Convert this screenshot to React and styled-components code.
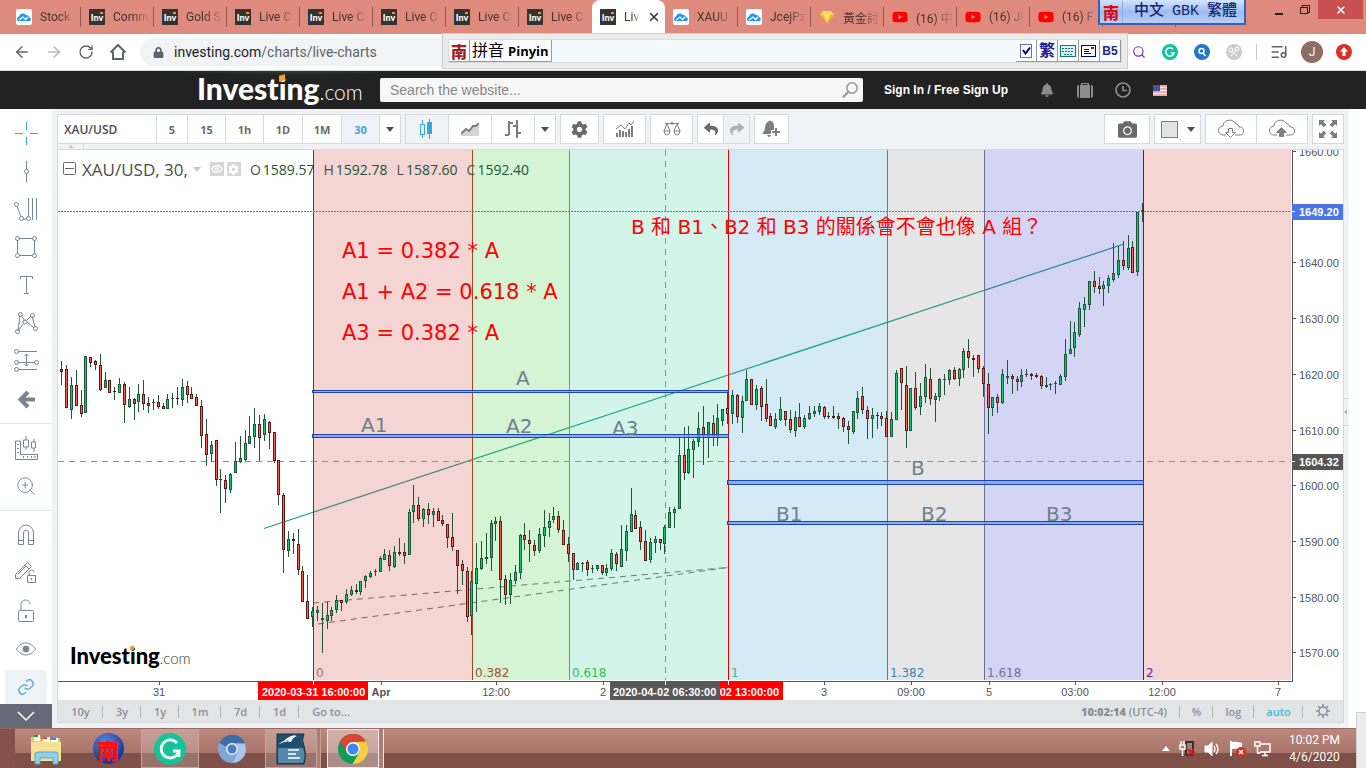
import styled, { createGlobalStyle } from "styled-components";
import { ArrowLeft, ArrowRight, RotateCw, X, Search, Eye, ZoomIn, ListMusic } from "lucide-react";
import { FaYoutube, FaCog, FaBell, FaCamera, FaReply, FaShare, FaLock } from "react-icons/fa";

const tabs = [
    { icon: "cloud", title: "Stock" },
    { icon: "inv", title: "Comm" },
    { icon: "inv", title: "Gold S" },
    { icon: "inv", title: "Live C" },
    { icon: "inv", title: "Live C" },
    { icon: "inv", title: "Live C" },
    { icon: "inv", title: "Live C" },
    { icon: "inv", title: "Live C" },
    { icon: "inv", title: "Liv", active: true },
    { icon: "cloud", title: "XAUU" },
    { icon: "cloud", title: "JcejPz" },
    { icon: "gem", title: "黃金討" },
    { icon: "yt", title: "(16) 中" },
    { icon: "yt", title: "(16) Ji" },
    { icon: "yt", title: "(16) F" },
];

// high, body top, body bottom, low, up (1) / down (0)
const candles = [
    [361,369,372,385,0],[365,369,408,408,0],[377,385,410,419,1],[370,385,406,406,0],[390,405,414,417,0],
    [356,356,413,413,1],[357,357,363,367,0],[360,361,365,370,0],[354,365,390,391,0],[372,380,388,388,1],
    [380,380,393,393,0],[387,391,392,400,0],[378,384,393,393,1],[382,384,405,423,0],[387,399,407,408,1],
    [398,399,404,420,0],[384,394,402,412,1],[380,394,404,410,0],[397,403,406,413,0],[399,402,403,410,1],
    [395,402,407,409,0],[403,406,409,409,0],[394,399,409,409,1],[393,398,399,408,1],[387,398,399,405,0],
    [379,387,400,406,1],[381,386,395,403,0],[387,394,399,399,0],[394,397,406,406,0],[400,406,436,448,0],
    [419,434,455,466,0],[441,445,454,462,1],[440,440,480,486,0],[469,479,480,513,0],[475,480,489,503,0],
    [473,474,490,493,1],[442,461,473,473,1],[436,458,462,463,1],[430,443,460,461,1],[416,436,444,444,1],
    [408,424,437,448,1],[415,424,438,461,0],[414,419,435,441,1],[421,422,433,449,0],[432,432,461,463,0],
    [460,460,495,505,0],[493,495,550,573,0],[531,539,551,557,1],[533,539,541,554,0],[529,544,570,575,0],
    [566,571,602,602,0],[575,601,619,619,0],[607,611,617,627,1],[606,610,613,621,1],[603,618,620,653,1],
    [602,615,621,629,1],[607,610,616,621,1],[595,600,610,613,1],[600,600,603,611,0],[589,594,602,604,1],
    [586,590,595,596,1],[584,590,592,594,0],[581,581,592,595,1],[575,576,581,588,1],[571,573,577,578,1],
    [569,571,572,576,1],[556,558,572,572,1],[549,554,560,560,1],[550,555,566,571,0],[546,552,567,568,1],
    [538,552,554,556,0],[543,552,556,564,0],[509,512,555,555,1],[485,505,512,523,1],[497,505,519,521,0],
    [508,509,519,527,1],[503,509,515,524,0],[508,511,515,527,1],[508,511,521,521,0],[515,520,524,526,0],
    [524,524,538,548,0],[513,537,547,551,0],[550,550,566,594,0],[560,564,571,585,0],[567,571,617,622,0],
    [571,581,616,635,1],[543,568,584,612,1],[541,558,569,570,1],[533,557,559,564,1],[520,523,558,571,1],
    [517,521,524,541,1],[516,521,580,603,0],[575,579,595,605,0],[573,580,595,604,1],[565,572,581,584,1],
    [534,535,573,579,1],[523,535,540,550,0],[530,540,544,562,0],[540,545,551,556,0],[528,534,551,553,1],
    [510,527,536,547,1],[513,521,528,537,1],[507,516,520,523,1],[511,516,530,533,0],[520,530,545,545,0],
    [537,544,554,562,0],[553,553,570,580,0],[562,563,570,570,1],[562,563,564,572,1],[560,562,570,576,0],
    [565,568,569,573,1],[565,565,569,571,1],[565,565,573,575,0],[564,568,573,576,1],[549,553,569,571,1],
    [552,554,564,571,0],[525,549,567,567,1],[525,531,551,561,1],[488,514,532,532,1],[510,515,529,529,0],
    [521,527,542,550,0],[530,541,561,561,0],[538,542,560,563,1],[536,539,543,553,1],[539,539,543,550,0],
    [525,527,544,554,1],[507,512,528,528,1],[507,509,513,528,1],[437,455,509,509,1],[427,455,473,480,0],
    [426,449,473,474,1],[439,441,450,478,1],[412,428,442,447,1],[406,427,436,465,0],[422,422,437,458,1],
    [415,423,436,446,0],[404,418,437,446,1],[409,409,421,426,1],[390,408,414,424,0],[390,395,414,424,1],
    [394,395,417,423,0],[396,401,418,433,1],[370,379,401,401,1],[379,379,405,405,0],[385,389,405,410,1],
    [386,388,407,421,0],[379,404,419,422,0],[413,416,426,426,0],[413,419,427,429,1],[397,409,420,421,1],
    [411,411,420,426,0],[410,419,430,433,0],[411,417,431,437,1],[403,417,427,427,0],[415,418,427,429,1],
    [406,413,419,420,1],[406,411,414,417,1],[403,406,412,415,1],[406,407,417,419,0],[412,416,417,419,0],
    [406,416,418,419,0],[413,416,419,429,0],[417,418,427,432,0],[421,426,430,444,0],[411,411,432,434,1],
    [391,398,413,419,1],[387,396,410,414,0],[406,410,419,439,0],[408,415,419,438,1],[412,415,416,429,0],
    [412,416,419,426,0],[411,418,437,437,0],[412,419,437,437,1],[370,373,420,420,1],[368,368,383,410,0],
    [366,385,431,448,0],[388,388,431,431,1],[372,388,408,410,0],[383,396,407,415,1],[364,377,397,403,1],
    [368,379,399,405,0],[393,396,400,422,1],[378,379,397,401,1],[374,379,380,395,1],[369,370,380,385,1],
    [367,370,379,380,0],[368,369,379,386,1],[348,351,370,378,1],[339,351,358,368,0],[355,358,360,377,0],
    [355,355,369,373,0],[366,368,384,397,0],[373,384,408,434,0],[397,397,408,416,1],[394,397,403,413,0],
    [369,374,403,404,1],[360,376,378,384,1],[374,376,379,394,0],[376,379,382,391,0],[369,375,382,387,1],
    [369,374,375,377,0],[373,374,376,380,0],[373,375,377,378,0],[375,376,386,389,0],[377,385,387,388,1],
    [383,384,385,390,1],[381,383,384,394,1],[374,376,385,385,1],[339,354,377,381,1],[321,349,354,354,1],
    [322,332,348,357,1],[302,308,335,337,1],[297,304,310,327,1],[281,281,305,310,1],[271,281,287,293,0],
    [277,286,289,294,0],[281,285,289,306,1],[275,278,286,293,1],[243,273,280,282,1],[246,260,275,278,1],
    [241,260,266,270,0],[235,248,268,270,1],[241,247,273,273,0],[212,212,272,276,1],[203,210,211,222,0],
];

const candleX = (i) => 61 + Math.floor(i * 4.825 + 0.72);

const zones = [
    { x: 313, end: 472, fill: "#c82d23", line: "#e80000", label: "0", color: "#957872" },
    { x: 472, end: 569, fill: "#28c823", line: "#a4481f", label: "0.382", color: "#a9502f" },
    { x: 569, end: 728, fill: "#23cd91", line: "#33bb55", label: "0.618", color: "#2fc04c" },
    { x: 728, end: 887, fill: "#2896cd", line: "#f00000", label: "1", color: "#34b79e" },
    { x: 887, end: 984, fill: "#828282", line: "#4688ac", label: "1.382", color: "#3c86b4" },
    { x: 984, end: 1143, fill: "#2828c8", line: "#6c6c98", label: "1.618", color: "#73739b" },
    { x: 1143, end: 1291, fill: "#c82d23", line: "#41209c", label: "2", color: "#5230b0" },
];

const spans = [
    [312, 728, 390, 3],
    [312, 728, 434, 4],
    [727, 1143, 480, 5],
    [727, 1143, 521, 4],
];

const notes = [
    [516, 385, "A"], [361, 432, "A1"], [506, 433, "A2"], [612, 435, "A3"],
    [911, 475, "B"], [776, 521, "B1"], [921, 521, "B2"], [1046, 521, "B3"],
];

const formulas = [[342, 258, "A1 = 0.382 * A"], [342, 299, "A1 + A2 = 0.618 * A"], [342, 340, "A3 = 0.382 * A"]];

const prices = [[151, "1660.00"], [262, "1640.00"], [318, "1630.00"], [374, "1620.00"], [430, "1610.00"], [485, "1600.00"], [541, "1590.00"], [597, "1580.00"], [652, "1570.00"]];

const times = [[159, "31"], [381, "Apr"], [496, "12:00"], [603, "2"], [824, "3"], [911, "09:00"], [989, "5"], [1075, "03:00"], [1162, "12:00"], [1278, "7"]];

const ranges = [["10y", 45], ["3y", 38], ["1y", 38], ["1m", 42], ["7d", 39], ["1d", 39]];

const intervals = [["5", 31], ["15", 38], ["1h", 38], ["1D", 39], ["1M", 39], ["30", 38]];

const TabIcon = ({ type }) => {
    if (type === "inv") return <InvIcon>Inv</InvIcon>;
    if (type === "yt") return <FaYoutube size={16} color="#ff0000" />;
    if (type === "gem")
        return (
            <svg width="16" height="16" viewBox="0 0 16 16">
                <path d="M4 2h8l3 4-7 8-7-8z" fill="#f9b61c" />
                <path d="M4 2h8l3 4H1z" fill="#ffd85a" />
                <path d="M5 6h6l-3 8z" fill="#ffe27a" />
            </svg>
        );
    return (
        <svg width="16" height="16" viewBox="0 0 16 16">
            <rect width="16" height="16" rx="2" fill="#fff" />
            <path d="M2 12a2.500 2.500 0 0 1 1-4.500 4 4 0 0 1 7-1.500 3 3 0 0 1 3 2 2.300 2.300 0 0 1 1 4z" fill="#2196f3" />
            <path d="M3 11l4-3 2.500 2.500L12 8" stroke="#fff" strokeWidth="1.300" fill="none" />
        </svg>
    );
};

const Stroke = ({ children, size = 26, color = "#758696" }) => (
    <svg width={size} height={size} viewBox="0 0 26 26" fill="none" stroke={color} strokeWidth="1">
        {children}
    </svg>
);

const tools = [
    ["Crosshair", <Stroke color="#37a6dc"><path d="M2 13.500h8M17 13.500h8M13.500 2v8M13.500 17v8" /></Stroke>],
    ["Vertical line", <Stroke><path d="M13.500 3v8M13.500 16v8" /><circle cx="13.500" cy="13.500" r="2" /></Stroke>],
    ["Pitchfork", <Stroke><path d="M4 10l4 11M10 23h4M15.500 2v19M19.500 2v22M23.500 2v22" /><circle cx="3.500" cy="8.500" r="2" /><circle cx="8.500" cy="22.500" r="2" /><circle cx="15.500" cy="22.500" r="2" /></Stroke>],
    ["Rectangle", <Stroke><path d="M6 4.500h13M6 21.500h13M4.500 6v13M21.500 6v13" /><circle cx="4.500" cy="4.500" r="2" /><circle cx="21.500" cy="4.500" r="2" /><circle cx="4.500" cy="21.500" r="2" /><circle cx="21.500" cy="21.500" r="2" /></Stroke>],
    ["Text", <Stroke><path d="M7.500 7v-2.500h12v2.500M13.500 4.500v17M11 21.500h5" /></Stroke>],
    ["Pattern", <Stroke><path d="M5 21L7 6M8 5l4 6M14 10l4-4M19 6l3 11M21 18l-7-6M11 13l-6 8" /><circle cx="7.500" cy="4.500" r="2" /><circle cx="19.500" cy="5.500" r="2" /><circle cx="12" cy="12" r="2" /><circle cx="4.500" cy="21.500" r="2" /><circle cx="22.500" cy="18.500" r="2" /></Stroke>],
    ["Forecast", <Stroke><path d="M6 3.500h18M6 14.500h16M6 21.500h18M13.500 6v12M11.500 8l2-2 2 2M11.500 16l2 2 2-2" /><circle cx="3.500" cy="3.500" r="2" /><circle cx="3.500" cy="14.500" r="2" /><circle cx="23.500" cy="14.500" r="2" /><circle cx="3.500" cy="21.500" r="2" /></Stroke>],
    ["Back", <Stroke><path d="M8 13.500h14M15 6l-7.500 7.500L15 21" strokeWidth="4" /></Stroke>],
];

const measureTools = [
    ["Measure", <Stroke><path d="M2.500 6v18.500h22v-5H7.500V6zM4 9.500h2M4 13.500h2M4 17.500h2M10.500 21v2M14.500 21v2M18.500 21v2M22 21v2M13 1v4M13 12v3M10.500 5h5v7h-5zM21 4v3M21 13v4M18.500 7h4v6h-4z" /></Stroke>],
    ["Zoom in", <ZoomIn size={22} strokeWidth={1} />],
];

const lockTools = [
    ["Magnet", <Stroke><path d="M5.500 22.500V11a7.500 8 0 0 1 15 0v11.500h-5V11a2.500 3 0 0 0-5 0v11.500zM5.500 18.500h5M15.500 18.500h5" /></Stroke>],
    ["Stay in drawing mode", <Stroke><path d="M2.500 18.500v-4l12-12 4 4-12 12zM12 5l4 4M5 14l8-8M14.500 15.500h8v7h-8zM16 15v-2a2.500 2.500 0 0 1 5-1M18.500 18v2" /></Stroke>],
    ["Lock", <Stroke><path d="M8 12V7a4.500 4.500 0 0 1 9-1" /><rect x="5.500" y="12.500" width="15" height="11" rx="1" /><path d="M13 17v3" strokeWidth="2" /></Stroke>],
    ["Hide", <Stroke><path d="M3.500 13c5-8 14-8 19 0-5 8-14 8-19 0z" /><circle cx="13" cy="13" r="3" fill="#758696" /></Stroke>],
];

const Caret = ({ color = "#505050" }) => (
    <svg width="8" height="5" viewBox="0 0 8 5"><path d="M0 0h8L4 5z" fill={color} /></svg>
);

const CandlesIcon = () => (
    <svg width="16" height="20" viewBox="0 0 16 20">
        <path d="M3.500 1v4M3.500 15v4M10.500 0v20" stroke="#37a6dc" />
        <rect x="1.500" y="5.500" width="4" height="10" fill="none" stroke="#37a6dc" />
        <rect x="8" y="3" width="5" height="12" fill="#37a6dc" />
    </svg>
);

const Cloud = ({ up }) => (
    <svg width="28" height="20" viewBox="0 0 28 20" fill="none" stroke="#808080">
        <path d="M9 16H6a4.500 4.500 0 0 1 0-9 6.500 6 0 0 1 12-3 5 5 0 0 1 4 4 4 4 0 0 1 1 8h-5" />
        <path d="M11.500 9.500h4v4h3l-5 5-5-5h3z" fill={up ? "#808080" : "none"} transform={up ? "rotate(180 13.500 13.500)" : undefined} />
    </svg>
);

const Logo = ({ small }) => (
    <LogoText $small={small}>
        <b>Invest<LogoI $small={small}>i</LogoI>ng</b><span>.com</span>
    </LogoText>
);

const Nan = ({ size = 16, color = "#a32218" }) => <NanGlyph $size={size} $color={color}>南</NanGlyph>;

const Chart = () => (
    <ChartSvg viewBox="58 150 1285 550" preserveAspectRatio="xMinYMin meet" role="img" aria-label="XAU/USD, 30">
        <rect x="58" y="150" width="1285" height="550" fill="#fff" />
        <path d="M264 528.500L1124 244" stroke="#20a08c" strokeWidth="1.200" />
        <path d="M313 603L728 567.500M318 624L728 567.500" stroke="#6f6f6f" strokeDasharray="6 5" />
        {zones.map((z) => <rect key={z.label} x={z.x} y="150" width={z.end - z.x} height="530" fill={z.fill} opacity="0.2" />)}
        {zones.map((z) => <rect key={z.label} x={z.x} y="150" width="1" height="530" fill={z.line} />)}
        {zones.map((z) => <FibLabel key={z.label} x={z.x + 3} y="677" fill={z.color}>{z.label}</FibLabel>)}
        <path d="M58 461.500H1291M665.500 150V680" stroke="#8f8f8f" strokeDasharray="6 5" />
        <path d="M58 211.500H1291" stroke="#4d74e0" strokeDasharray="2 1" />
        <g shapeRendering="crispEdges">
            {candles.map(([h, t, b, l, up], i) => (
                <g key={i}>
                    <rect x={candleX(i)} y={h} width="1" height={Math.max(l - h, 1)} fill="#225437" />
                    <rect x={candleX(i) - 1} y={t} width="3" height={b - t} fill={up ? "#175a37" : "#5b1a13"} />
                    {b - t > 2 && <rect x={candleX(i)} y={t + 1} width="1" height={b - t - 2} fill={up ? "#0cc878" : "#fb6052"} />}
                </g>
            ))}
        </g>
        {spans.map(([x1, x2, y, h]) => (
            <rect key={y} x={x1 + 0.5} y={y + 0.5} width={x2 - x1} height={h - 1} fill="#6f9af0" fillOpacity="0.75" stroke="#1f46ac" />
        ))}
        {notes.map(([x, y, text]) => <Note key={text} x={x} y={y}>{text}</Note>)}
        {formulas.map(([x, y, text]) => <Formula key={y} x={x} y={y}>{text}</Formula>)}
        <Note x="631" y="234" $red>B 和 B1、B2 和 B3 的關係會不會也像 A 組？</Note>

        <path d="M1292.500 150V681.500M58 681.500H1293" stroke="#555" />
        {prices.map(([y, text]) => (
            <g key={text}>
                <path d={`M1293 ${y + 0.5}h3`} stroke="#555" />
                <AxisText x="1299" y={y + 5}>{text}</AxisText>
            </g>
        ))}
        <rect x="1292" y="204" width="51" height="16" fill="#4a76e8" />
        <rect x="1292" y="454" width="51" height="16" fill="#555" />
        <path d="M1292 211.500h3M1292 461.500h3" stroke="#fff" />
        <AxisText x="1299" y="216" $tag>1649.20</AxisText>
        <AxisText x="1299" y="466" $tag>1604.32</AxisText>
        {times.map(([x, text]) => (
            <g key={x}>
                <path d={`M${x + 0.5} 682v3`} stroke="#555" />
                <AxisText x={x} y="696" textAnchor="middle" $bold={text === "Apr"}>{text}</AxisText>
            </g>
        ))}
        <rect x="258" y="681" width="110" height="19" fill="#f00" />
        <AxisText x="262" y="696" $tag>2020-03-31 16:00:00</AxisText>
        <rect x="720" y="681" width="63" height="19" fill="#f00" />
        <AxisText x="779" y="696" textAnchor="end" $tag>02 13:00:00</AxisText>
        <rect x="610" y="681" width="110" height="19" fill="#585858" />
        <AxisText x="613" y="696" $tag>2020-04-02 06:30:00</AxisText>
        <path d="M313.500 681v4M665.500 681v4M728.500 681v4" stroke="#fff" />
    </ChartSvg>
);

const App = () => {
    return (
        <Page>
            <Global />
            <TabStrip>
                {tabs.map((tab, i) => (
                    <Tab key={i} $active={tab.active} $beforeActive={i === 7}>
                        <TabIcon type={tab.icon} />
                        <TabTitle $active={tab.active}>{tab.title}</TabTitle>
                        {tab.active && <TabClose aria-label="Close tab"><X size={14} strokeWidth={2.500} /></TabClose>}
                    </Tab>
                ))}
                <Tab />
                <WindowButtons>
                    <WinButton aria-label="Minimize"><svg width="10" height="12"><rect x="2" y="9" width="8" height="2" fill="#222" /></svg></WinButton>
                    <WinButton aria-label="Restore"><svg width="12" height="12" fill="none" stroke="#222"><path d="M3 3V1.500h7.500v7H9" /><rect x="1.500" y="3.500" width="7" height="6" /></svg></WinButton>
                    <WinButton aria-label="Close" $close><X size={12} strokeWidth={3} /></WinButton>
                </WindowButtons>
                <ImeBadge>
                    <ImeBadgeIcon><Nan size={16} color="#d81010" /></ImeBadgeIcon>
                    <span>中文</span><span>GBK</span><span>繁體</span>
                </ImeBadge>
            </TabStrip>

            <AddressBar>
                <NavButton aria-label="Back"><ArrowLeft size={18} /></NavButton>
                <NavButton aria-label="Forward" $off><ArrowRight size={18} /></NavButton>
                <NavButton aria-label="Reload"><RotateCw size={16} /></NavButton>
                <NavButton aria-label="Home">
                    <svg width="18" height="18" viewBox="0 0 18 18" fill="none" stroke="currentColor" strokeWidth="2"><path d="M1.500 9.500L9 2l7.500 7.500M4 8.500V16h10V8.500" /></svg>
                </NavButton>
                <Omnibox>
                    <FaLock size={11} color="#5f6368" />
                    <Url href="#charts">investing.com<span>/charts/live-charts</span></Url>
                </Omnibox>
                <Extensions>
                    <Search size={14} color="#7b2fb5" />
                    <svg width="16" height="16" viewBox="0 0 16 16"><circle cx="8" cy="8" r="8" fill="#15c39a" /><path d="M11 5a4.200 4.200 0 1 0 1 4H9" fill="none" stroke="#fff" strokeWidth="1.600" /></svg>
                    <svg width="16" height="16" viewBox="0 0 16 16"><circle cx="8" cy="8" r="8" fill="#2378c8" /><circle cx="7.500" cy="7" r="2.500" fill="none" stroke="#fff" strokeWidth="1.500" /><path d="M9 9l2.500 3" stroke="#fff" strokeWidth="1.500" /></svg>
                    <svg width="16" height="16" viewBox="0 0 16 16" fill="none" stroke="#fff"><circle cx="8" cy="8" r="8" fill="#ccc" stroke="none" /><circle cx="5" cy="6" r="2" /><circle cx="11" cy="5" r="2" /><path d="M5 12l6-7M11 12L6 7" /></svg>
                </Extensions>
                <Profile>
                    <Bar />
                    <ListMusic size={18} color="#5f6368" />
                    <Avatar aria-label="Profile">J</Avatar>
                    <svg width="16" height="16" viewBox="0 0 16 16"><circle cx="8" cy="8" r="8" fill="#d93025" /><path d="M8 3l4 4.500H9.500V12h-3V7.500H4z" fill="#fff" /></svg>
                </Profile>
                <ImePanel>
                    <ImeInner>
                        <ImeKey><Nan size={16} /></ImeKey>
                        <ImeKey $grow>拼音 <b>Pinyin</b></ImeKey>
                        <Spacer />
                        <ImeKey><svg width="14" height="14" fill="none"><rect x="1.500" y="0.500" width="11" height="13" stroke="#6a6ac8" /><path d="M4 6l2.500 3.500L11 3.500" stroke="#000080" strokeWidth="2" /></svg></ImeKey>
                        <ImeKey $blue>繁</ImeKey>
                        <ImeKey><svg width="16" height="12"><rect x="0.500" y="0.500" width="15" height="11" fill="#d8f0f0" stroke="#107878" /><path d="M2 3.500h12M2 6.500h12M4 9.500h8" stroke="#107878" strokeDasharray="2 1" /></svg></ImeKey>
                        <ImeKey><svg width="16" height="12"><rect x="0.500" y="0.500" width="14" height="11" fill="#fff" stroke="#000080" /><path d="M3 4.500h5M3 6.500h5M3 8.500h7" stroke="#000080" /><rect x="10" y="2" width="3" height="2" fill="#e00" /></svg></ImeKey>
                        <ImeKey $blue $small>B5</ImeKey>
                    </ImeInner>
                </ImePanel>
            </AddressBar>

            <SiteHeader>
                <HeaderInner>
                    <a href="#home" aria-label="Investing.com"><Logo /></a>
                    <SearchBox>
                        <input type="text" aria-label="Search the website" placeholder="Search the website..." />
                        <button aria-label="Search">
                            <svg width="18" height="18" viewBox="0 0 18 18" fill="none" stroke="#9a9a9a"><circle cx="11" cy="7" r="5.200" strokeWidth="1.600" /><path d="M7 11l-5 5.500" strokeWidth="2.400" /></svg>
                        </button>
                    </SearchBox>
                    <SignIn><a href="#login">Sign In</a> / <a href="#signup">Free Sign Up</a></SignIn>
                    <HeaderIcons>
                        <FaBell size={14} />
                        <svg width="18" height="16" viewBox="0 0 18 16"><path d="M5 3V1h8v2h1v13H4V3zM6.500 3h5V2h-5z" fill="currentColor" /><path d="M3 3H2a2 2 0 0 0-1 2v9q0 2 2 2zM15 3h1a2 2 0 0 1 1 2v9q0 2-2 2z" fill="currentColor" /></svg>
                        <svg width="16" height="16" viewBox="0 0 16 16" fill="none" stroke="currentColor" strokeWidth="1.700"><circle cx="8" cy="8" r="7" /><path d="M8 4v4.500h4" /></svg>
                        <svg width="14" height="11" viewBox="0 0 14 11"><rect width="14" height="11" fill="#fff" /><path d="M0 1h14M0 4h14M0 7h14M0 10h14" stroke="#e0525c" /><rect width="7" height="6" fill="#4a4f9c" /></svg>
                    </HeaderIcons>
                </HeaderInner>
            </SiteHeader>

            <Main>
                <Sidebar>
                    <ToolGroup>{tools.map(([name, icon]) => <Tool key={name} aria-label={name}>{icon}</Tool>)}</ToolGroup>
                    <ToolGroup>{measureTools.map(([name, icon]) => <Tool key={name} aria-label={name}>{icon}</Tool>)}</ToolGroup>
                    <ToolGroup>
                        {lockTools.map(([name, icon]) => <Tool key={name} aria-label={name}>{icon}</Tool>)}
                        <Tool aria-label="Link" $active>
                            <svg width="18" height="18" viewBox="0 0 24 24" fill="none" stroke="#37a6dc" strokeWidth="1.600"><path d="M10 13a5 5 0 0 0 7.500.5l3-3a5 5 0 0 0-7-7l-1.700 1.700M14 11a5 5 0 0 0-7.500-.5l-3 3a5 5 0 0 0 7 7l1.700-1.700" /></svg>
                        </Tool>
                    </ToolGroup>
                    <Collapse aria-label="Scroll down">
                        <svg width="18" height="10" viewBox="0 0 18 10" fill="none" stroke="#fff" strokeWidth="1.500"><path d="M1 1l8 8 8-8" /></svg>
                    </Collapse>
                </Sidebar>

                <Widget>
                    <Toolbar>
                        <Group>
                            <SymbolInput aria-label="Symbol" defaultValue="XAU/USD" />
                            {intervals.map(([text, w]) => <Btn key={text} $w={w} $active={text === "30"}>{text}</Btn>)}
                            <Btn $w={20} aria-label="More intervals"><Caret /></Btn>
                        </Group>
                        <Group>
                            <Btn $w={43} $active aria-label="Candles"><CandlesIcon /></Btn>
                            <Btn $w={43} aria-label="Area"><svg width="18" height="13" viewBox="0 0 18 13"><path d="M0 12l5-5 3 2 4-5h3l3-3v12H0z" fill="#d4d4d4" /><path d="M0 11l5-5 3 2 4-5h3l3-3" fill="none" stroke="#7d7d7d" strokeWidth="2" /></svg></Btn>
                            <Btn $w={43} aria-label="Bars"><svg width="18" height="18" viewBox="0 0 18 18" fill="none" stroke="#7d7d7d" strokeWidth="2"><path d="M5 1v14M1 15h4M5 3h4M13 0v18M9 6h4M13 13h4" /></svg></Btn>
                            <Btn $w={20} aria-label="More styles"><Caret /></Btn>
                        </Group>
                        <Group><Btn $w={37} aria-label="Settings"><FaCog size={17} /></Btn></Group>
                        <Group><Btn $w={41} aria-label="Indicators"><svg width="18" height="16" viewBox="0 0 18 16" fill="none" stroke="#7d7d7d"><path d="M1 12v4M4 9v7M7 10v6M10 11v5M13 8v8M16 5v11" strokeWidth="2" /><path d="M0 8l5-4 4 4 4-6 2 2 3-4" /></svg></Btn></Group>
                        <Group><Btn $w={41} aria-label="Compare"><svg width="18" height="16" viewBox="0 0 18 16" fill="none" stroke="#7d7d7d"><path d="M2 2.500h14M9 0v4M4 3l-3 7M4 3l3 7M14 3l-3 7M14 3l3 7" /><path d="M1 10h6q0 4-3 4t-3-4zM11 10h6q0 4-3 4t-3-4z" /></svg></Btn></Group>
                        <Group>
                            <Btn $w={26} aria-label="Undo"><FaReply size={14} /></Btn>
                            <Btn $w={25} $off aria-label="Redo"><FaShare size={14} /></Btn>
                        </Group>
                        <Group><Btn $w={33} aria-label="Alert"><svg width="19" height="18" viewBox="0 0 19 18" fill="#7d7d7d"><path d="M7 1q1-1 2 0 3 1 3 5v4H9v4H0q3-3 3-6 0-5 4-7zM5 15h4q-1 2-2 2t-2-2z" /><path d="M14 8v8M10 12h8" stroke="#7d7d7d" strokeWidth="2" /></svg></Btn></Group>
                        <Spacer />
                        <Group><Btn $w={44} aria-label="Snapshot"><FaCamera size={19} /></Btn></Group>
                        <Group><Btn $w={45} aria-label="Color"><Swatch /><Caret /></Btn></Group>
                        <Group>
                            <Btn $w={51} aria-label="Load"><Cloud /></Btn>
                            <Btn $w={50} aria-label="Save"><Cloud up /></Btn>
                        </Group>
                        <Group><Btn $w={30} aria-label="Full screen"><svg width="18" height="18" viewBox="0 0 18 18" fill="#7d7d7d"><path d="M0 0h6L4.300 1.700 7.300 4.700 4.700 7.300 1.700 4.300 0 6zM18 0v6l-1.700-1.700-3 3-2.600-2.600 3-3L12 0zM0 18v-6l1.700 1.700 3-3 2.600 2.600-3 3L6 18zM18 18h-6l1.700-1.700-3-3 2.600-2.600 3 3L18 12z" /></svg></Btn></Group>
                    </Toolbar>
                    <Fold><Caret color="#c2c5ca" /></Fold>
                    <ChartBox>
                        <Chart />
                        <Legend>
                            <svg width="14" height="14" fill="none" stroke="#666"><rect x="0.500" y="0.500" width="12" height="12" rx="1" /><path d="M2 6.500h9" /></svg>
                            <LegendTitle>XAU/USD, 30,</LegendTitle>
                            <Caret color="#c8c8c8" />
                            <LegendIcons>
                                <LegendButton aria-label="Hide series"><Eye size={12} strokeWidth={2.500} /></LegendButton>
                                <LegendButton aria-label="Format"><FaCog size={11} /></LegendButton>
                            </LegendIcons>
                            {[["O", "1589.57"], ["H", "1592.78"], ["L", "1587.60"], ["C", "1592.40"]].map(([k, v]) => <Ohlc key={k}>{k}<b>{v}</b></Ohlc>)}
                        </Legend>
                        <Watermark><Logo small /></Watermark>
                        <PanelHandle><svg width="3" height="6"><path d="M3 0v6L0 3z" fill="#b4b7bc" /></svg></PanelHandle>
                    </ChartBox>
                    <BottomBar>
                        {ranges.map(([text, w]) => <RangeButton key={text} $w={w}>{text}</RangeButton>)}
                        <RangeButton $w={64} $last>Go to...</RangeButton>
                        <Spacer />
                        <RangeButton $w={112}><strong>10:02:14</strong>&nbsp;(UTC-4)</RangeButton>
                        <RangeButton $w={33}>%</RangeButton>
                        <RangeButton $w={41}>log</RangeButton>
                        <RangeButton $w={49} $blue>auto</RangeButton>
                        <RangeButton $w={40} $last aria-label="Chart settings">
                            <svg width="14" height="14" viewBox="0 0 14 14" fill="none" stroke="#8c9096"><circle cx="7" cy="7" r="4" strokeWidth="1.400" /><path d="M7 0v3M7 11v3M0 7h3M11 7h3M2 2l2 2M10 10l2 2M2 12l2-2M10 4l2-2" strokeWidth="1.600" /></svg>
                        </RangeButton>
                    </BottomBar>
                </Widget>
            </Main>

            <Taskbar>
                <Task aria-label="Explorer">
                    <svg width="34" height="32" viewBox="0 0 34 32"><path d="M2 4h9l2 3h14l4-2v23H2z" fill="#e8c964" /><path d="M5 2h6v6H5zM14 4h7v5h-7zM22 5h7v5h-7z" fill="#fff" /><path d="M5 2h4v2H5z" fill="#18b018" /><path d="M14 4h4v2h-4z" fill="#e04820" /><path d="M22 5h5v2h-5z" fill="#2c8ce0" /><path d="M2 9h30v19H2z" fill="#f6e294" /><path d="M6 31v-10q0-2 3-2h17q3 0 3 2v10h-5v-6H11v6z" fill="#8fd0ee" stroke="#58a6cc" /></svg>
                </Task>
                <Task aria-label="NJStar"><Globe><Nan size={22} color="#ff1010" /></Globe></Task>
                <Task aria-label="Grammarly" $open>
                    <svg width="32" height="32" viewBox="0 0 32 32"><circle cx="16" cy="16" r="16" fill="#15c39a" /><path d="M23 10a9 9 0 1 0 2 8h-6M25 17v7" fill="none" stroke="#fff" strokeWidth="2.800" /></svg>
                </Task>
                <Task aria-label="Chromium">
                    <svg width="28" height="28" viewBox="0 0 28 28"><circle cx="14" cy="14" r="14" fill="#7fa6d6" /><path d="M1.500 8A14 14 0 0 1 27 8H14a6 6 0 0 0-5.500 4z" fill="#3f6da8" /><path d="M27 9a14 14 0 0 1-12 19l5-12q1-4-2-7z" fill="#a8c6e8" /><circle cx="14" cy="14" r="6" fill="#e8eff8" /><circle cx="14" cy="14" r="4.500" fill="#4a7cc0" /></svg>
                </Task>
                <Task aria-label="Writer" $open $stack>
                    <svg width="32" height="32" viewBox="0 0 32 32"><path d="M2 1h27q-3 6 0 12 3 8 0 18H2z" fill="#1f4e70" stroke="#123048" /><path d="M3 15h25q3 8 0 15H3z" fill="#5588a8" /><path d="M3 12q6-6 10-4 3-6 9-5-4 1-6 6-6-2-13 3zM9 8q4-5 12-6-5 2-7 5z" fill="#fff" /><path d="M13 17h11M13 21h8M13 25h12" stroke="#fff" strokeWidth="1.500" /></svg>
                </Task>
                <Task aria-label="Chrome" $open $bright $stack>
                    <svg width="30" height="30" viewBox="0 0 30 30"><circle cx="15" cy="15" r="15" fill="#109d58" /><path d="M2 7.500A15 15 0 0 1 28 7.500H15L8.500 18z" fill="#db4437" /><path d="M28 7.500A15 15 0 0 1 14.500 30l7-11.500Q24 12 15 8z" fill="#ffcd40" /><circle cx="15" cy="15" r="7" fill="#fff" /><circle cx="15" cy="15" r="5.500" fill="#4285f4" /></svg>
                </Task>
                <Spacer />
                <Tray>
                    <svg width="8" height="5"><path d="M4 0l4 5H0z" fill="#fff" /></svg>
                    <svg width="17" height="17" viewBox="0 0 17 17" fill="none" stroke="#fff"><rect x="7" y="2" width="7" height="13" stroke="#333" strokeWidth="2" /><path d="M2 1v3M5 1v3M1 5h5v4H1zM3.500 9v7" strokeWidth="1.500" /><path d="M9 9l6 6M15 9l-6 6" stroke="#d22020" strokeWidth="2" /></svg>
                    <svg width="16" height="16" viewBox="0 0 16 16" fill="none" stroke="#fff"><path d="M1 5h3l4-4v14l-4-4H1z" fill="#fff" /><path d="M10 5q2 3 0 6M12 3q4 5 0 10" strokeWidth="1.300" /></svg>
                    <svg width="17" height="17" viewBox="0 0 17 17"><path d="M1 1h2v15H1zM3 2q4-1 10 1v7q-5-2-10-1z" fill="#fff" /><circle cx="12" cy="12" r="5" fill="#d82c20" /><path d="M10 10l4 4M14 10l-4 4" stroke="#fff" strokeWidth="1.500" /></svg>
                    <svg width="17" height="16" viewBox="0 0 17 16" fill="none" stroke="#fff" strokeWidth="1.500"><path d="M7 3h9v8H6M11 11v3M8 14.500h6M1 1h5v4H1zM3.500 5v7h3" /></svg>
                </Tray>
                <Clock>10:02 PM<br />4/6/2020</Clock>
                <Corner />
            </Taskbar>
        </Page>
    );
};

const uiFont = `"Open Sans", "Noto Sans", "Noto Sans CJK TC", sans-serif`;
const chromeFont = `Roboto, "Noto Sans CJK TC", sans-serif`;
const arial = `"Liberation Sans", Arial, sans-serif`;

const Global = createGlobalStyle`
* { box-sizing: border-box; }
body { margin: 0; background: #fff; font-family: ${uiFont}; }
button, input { font-family: inherit; border: 0; padding: 0; margin: 0; background: none; color: inherit; }
a { color: inherit; text-decoration: none; }
svg { display: block; flex-shrink: 0; }
`;

const Page = styled.div`
display: flex;
flex-direction: column;
min-height: 100vh;
`;

const TabStrip = styled.div`
position: relative;
display: flex;
height: 34px;
padding-left: 8px;
background: #de8b7e;
overflow: hidden;
`;

const Tab = styled.div`
position: relative;
display: flex;
align-items: center;
width: 73px;
gap: 8px;
padding-left: 8px;
background: ${(p) => (p.$active ? "#fff" : "transparent")};
border-radius: 8px 8px 0 0;

&::after {
    content: "";
    display: ${(p) => (p.$active || p.$beforeActive ? "none" : "block")};
    position: absolute;
    right: 0;
    top: 7px;
    height: 20px;
    width: 1px;
    background: #93594f;
}
`;

const TabTitle = styled.span`
flex: 1;
white-space: nowrap;
font: 12px ${chromeFont};
color: #453330;
mask-image: linear-gradient(90deg, #000 ${(p) => (p.$active ? "60%" : "45%")}, transparent ${(p) => (p.$active ? "110%" : "90%")});
`;

const TabClose = styled.button`
margin-right: 10px;
color: #333;
`;

const InvIcon = styled.span`
position: relative;
flex: none;
width: 16px;
height: 16px;
background: #333;
color: #fff;
font: 900 9px/17px Lato, sans-serif;
text-align: center;

&::after {
    content: "";
    position: absolute;
    right: 2px;
    top: 3px;
    width: 3px;
    height: 2px;
    background: #f7941d;
}
`;

const WindowButtons = styled.div`
display: flex;
margin-left: auto;
padding-right: 3px;
`;

const WinButton = styled.button`
display: flex;
align-items: center;
justify-content: center;
width: ${(p) => (p.$close ? "45px" : "27px")};
height: 19px;
color: #fff;
background: ${(p) => (p.$close ? "#c75050" : "none")};
`;

const NanGlyph = styled.span`
font-family: "Noto Sans CJK TC", sans-serif;
font-weight: 900;
font-size: ${(p) => p.$size}px;
line-height: 1;
color: ${(p) => p.$color};
`;

const ImeBadge = styled.div`
position: absolute;
top: 0;
right: 120px;
display: flex;
align-items: center;
gap: 8px;
width: 148px;
height: 25px;
border: 2px solid #3a62b4;
border-top: 0;
background: linear-gradient(#d4e4fd, #9dbdf2 50%, #b8d0fa);
color: #14286e;
font: 500 15px/23px "Liberation Mono", "Noto Sans CJK TC", monospace;
`;

const ImeBadgeIcon = styled.div`
display: flex;
padding: 3px;
margin-right: 3px;
border-right: 1px solid #8cabe0;
`;

const AddressBar = styled.div`
position: relative;
display: flex;
align-items: center;
height: 37px;
padding: 0 14px 0 8px;
border-bottom: 1px solid #d5d9d5;
`;

const NavButton = styled.button`
display: flex;
justify-content: center;
width: 28px;
margin-right: 4px;
color: ${(p) => (p.$off ? "#b8babd" : "#5f6368")};
`;

const Omnibox = styled.div`
flex: 1;
display: flex;
align-items: center;
gap: 10px;
height: 28px;
margin-left: 4px;
padding-left: 13px;
border-radius: 14px;
background: #f1f3f4;
`;

const Url = styled.a`
font: 14px ${chromeFont};
color: #202124;
white-space: nowrap;

span { color: #5f6368; }
`;

const Extensions = styled.div`
display: flex;
align-items: center;
gap: 16px;
margin-left: 8px;
`;

const Profile = styled(Extensions)`
gap: 13px;
margin-left: 14px;
`;

const Bar = styled.div`
width: 1px;
height: 16px;
background: #ccc;
`;

const Avatar = styled.button`
width: 22px;
height: 22px;
border-radius: 50%;
background: #8d6e63;
color: #fff;
font: 12px ${chromeFont};
`;

const ImePanel = styled.div`
position: absolute;
left: 442px;
right: 238px;
top: -1px;
height: 36px;
padding: 5px;
border: 1px solid #cfcfcf;
background: #ebebeb;
`;

const ImeInner = styled.div`
display: flex;
height: 24px;
border: 1px solid #dcdcdc;
background: #f4faff;
`;

const ImeKey = styled.div`
display: flex;
align-items: center;
justify-content: center;
gap: 4px;
width: ${(p) => (p.$grow ? "auto" : "21px")};
padding: 0 2px;
background: #fafcff;
border-right: 1px solid #999;
border-bottom: 1px solid #999;
color: ${(p) => (p.$blue ? "#22228c" : "#000")};
font: ${(p) => (p.$blue ? 700 : 400)} ${(p) => (p.$small ? 12 : 16)}px/20px "Liberation Sans", "Noto Sans CJK TC", sans-serif;

b {
    font-family: ${uiFont};
    font-size: 13px;
}
`;

const SiteHeader = styled.header`
height: 38px;
background: radial-gradient(ellipse at 290px 0, #3a3a3a, #222 120px);
`;

const HeaderInner = styled.div`
display: flex;
align-items: center;
height: 100%;
max-width: 972px;
margin: 0 auto;
color: #fff;
`;

const LogoText = styled.div`
display: flex;
align-items: baseline;
width: ${(p) => (p.$small ? "auto" : "183px")};
color: ${(p) => (p.$small ? "#000" : "#fff")};
font: 900 ${(p) => (p.$small ? 22 : 30)}px/36px Lato, sans-serif;

b { font-weight: 900; }

span {
    font-weight: 300;
    font-size: ${(p) => (p.$small ? 15 : 21)}px;
    color: ${(p) => (p.$small ? "#333" : "#fff")};
}
`;

const LogoI = styled.i`
position: relative;
font-style: normal;

&::before {
    content: "";
    position: absolute;
    left: 10%;
    top: ${(p) => (p.$small ? "4px" : "5px")};
    width: ${(p) => (p.$small ? "4px" : "6px")};
    height: ${(p) => (p.$small ? "4px" : "6px")};
    background: #f7a01d;
    transform: skewY(-14deg);
}
`;

const SearchBox = styled.div`
flex: 1;
display: flex;
align-items: center;
height: 24px;
padding: 0 4px 0 10px;
border-radius: 2px;
background: #f7f7f7;

input {
    flex: 1;
    font: 14px ${arial};
    color: #333;
    outline: none;
}

input::placeholder { color: #878787; }
`;

const SignIn = styled.div`
margin-left: 21px;
font: bold 12px ${arial};
white-space: nowrap;
`;

const HeaderIcons = styled.div`
display: flex;
align-items: center;
justify-content: space-between;
width: 127px;
margin: 0 2px 0 32px;
color: #8c8c8c;
`;

const Main = styled.main`
flex: 1;
display: flex;
`;

const Sidebar = styled.aside`
display: flex;
flex-direction: column;
width: 52px;
`;

const ToolGroup = styled.div`
padding: 5px 0;

& + & { border-top: 1px solid #dfe8f0; }
&:nth-child(3) { padding-bottom: 0; }
`;

const Tool = styled.button`
display: flex;
align-items: center;
justify-content: center;
width: ${(p) => (p.$active ? "42px" : "52px")};
height: ${(p) => (p.$active ? "34px" : "38px")};
margin: ${(p) => (p.$active ? "2px 5px 0" : "0")};
border-radius: 2px;
background: ${(p) => (p.$active ? "#f0f3f6" : "none")};
color: #758696;
`;

const Collapse = styled.button`
display: flex;
align-items: center;
justify-content: center;
flex: 1;
min-height: 24px;
background: #656a78;
`;

const Widget = styled.section`
flex: 1;
display: flex;
flex-direction: column;
margin-right: 17px;
padding: 5px;
background: #f0f2f6;
`;

const Toolbar = styled.div`
display: flex;
gap: 4px;
height: 30px;
`;

const Group = styled.div`
display: flex;
border: 1px solid #d6d9de;
background: #fff;

& > * { border-right: 1px solid #d6d9de; }
& > *:last-child { border-right: 0; }
`;

const SymbolInput = styled.input`
width: 99px;
padding-left: 6px;
font-size: 12px;
font-weight: 600;
color: #4d4d4d;
`;

const Btn = styled.button`
display: flex;
align-items: center;
justify-content: center;
gap: 9px;
width: ${(p) => p.$w}px;
font-size: 11px;
font-weight: 700;
color: ${(p) => (p.$active ? "#37a6dc" : p.$off ? "#b0b0b0" : "#6a6a6a")};
background: ${(p) => (p.$active || p.$off ? "#f0f2f5" : "#fff")};
`;

const Swatch = styled.span`
width: 17px;
height: 17px;
border: 1px solid #808080;
background: #e3e3e3;
`;

const Spacer = styled.div`
flex: 1;
`;

const Fold = styled.div`
display: flex;
align-items: center;
justify-content: center;
width: 27px;
height: 5px;
border: solid #d6d9de;
border-width: 0 1px;

svg { height: 3px; transform: rotate(180deg); }
`;

const ChartBox = styled.div`
position: relative;
flex: 1;
border: solid #d6d9de;
border-width: 1px 1px 0;
background: #fff;
`;

const ChartSvg = styled.svg`
width: 100%;
height: auto;
`;

const AxisText = styled.text`
font: ${(p) => (p.$tag || p.$bold ? "bold" : "normal")} 11px ${arial};
fill: ${(p) => (p.$tag ? "#fff" : "#555")};
`;

const FibLabel = styled.text`
font: 12px "DejaVu Sans", Verdana, sans-serif;
`;

const Note = styled.text`
font: 20px "DejaVu Sans", "Noto Sans CJK TC", sans-serif;
fill: ${(p) => (p.$red ? "#ff0000" : "#6e7f8f")};
`;

const Formula = styled(Note)`
font-size: 21px;
fill: #ff0000;
`;

const Legend = styled.div`
position: absolute;
left: 5px;
top: 7px;
display: flex;
align-items: center;
height: 24px;
color: #4d4d4d;
`;

const LegendTitle = styled.span`
margin: 0 5px;
font-size: 17px;
`;

const LegendIcons = styled.div`
display: flex;
gap: 3px;
margin-left: 9px;
`;

const LegendButton = styled.button`
display: flex;
align-items: center;
justify-content: center;
width: 14px;
height: 14px;
background: #d6d6d6;
color: #fff;
`;

const Ohlc = styled.span`
margin-left: 9px;
font-size: 14px;

b {
    margin-left: 2px;
    font-weight: 400;
    color: #225437;
}
`;

const Watermark = styled.div`
position: absolute;
left: 12px;
bottom: 24px;
`;

const PanelHandle = styled.div`
position: absolute;
right: -6px;
top: 248px;
display: flex;
align-items: center;
width: 5px;
height: 28px;
border: solid #d6d9de;
border-width: 1px 0;
`;

const BottomBar = styled.div`
display: flex;
height: 23px;
border: 1px solid #d6d9de;
border-top: 0;
background: #e3e4e6;
`;

const RangeButton = styled.button`
position: relative;
display: flex;
align-items: center;
justify-content: center;
width: ${(p) => p.$w}px;
font-size: 11px;
font-weight: 600;
color: ${(p) => (p.$blue ? "#4ab4e2" : "#8c9096")};

&::after {
    content: "";
    display: ${(p) => (p.$last ? "none" : "block")};
    position: absolute;
    right: 0;
    height: 13px;
    width: 1px;
    background: #b4b6ba;
}
`;

const Taskbar = styled.footer`
position: relative;
display: flex;
height: 40px;
padding: 0 26px 0 15px;
border-top: 1px solid #9a665d;
background: linear-gradient(#bb887f, #a97468 24px, #7f5048 24px, #7f5048);
box-shadow: inset 15px 0 #84524a;
`;

const Task = styled.button`
display: flex;
align-items: center;
justify-content: center;
width: ${(p) => (p.$stack ? "52px" : p.$open ? "58px" : "62px")};
margin: ${(p) => (p.$stack ? "0 8px 0 2px" : p.$open ? "0 2px" : "0")};
border: ${(p) => (p.$open ? "1px solid" : "0")};
border-color: ${(p) => (p.$bright ? "#f4e8e6" : "#c9a49e")};
background: ${(p) => (p.$bright ? "rgba(255,255,255,0.35)" : p.$open ? "rgba(255,255,255,0.2)" : "none")};
box-shadow: ${(p) => (p.$stack ? (p.$bright ? "4px 0 #a98079, 5px 0 #f4e8e6" : "3px 0 #a98079, 4px 0 #c9a49e") : "none")};
`;

const Globe = styled.span`
display: flex;
align-items: center;
justify-content: center;
width: 31px;
height: 31px;
border-radius: 50%;
background: radial-gradient(circle at 40% 30%, #5a86e0, #1c3a98 70%);
`;

const Tray = styled.div`
display: flex;
align-items: center;
justify-content: space-between;
width: 109px;
margin-right: 18px;
`;

const Clock = styled.div`
align-self: center;
font: 12px/17px ${chromeFont};
color: #fff;
text-align: center;
white-space: nowrap;
`;

const Corner = styled.div`
position: absolute;
right: 0;
bottom: 0;
width: 10px;
height: 56px;
border: solid #cfcfcf;
border-width: 1px 0 0 1px;
background: #ececec;
`;

export default App;
